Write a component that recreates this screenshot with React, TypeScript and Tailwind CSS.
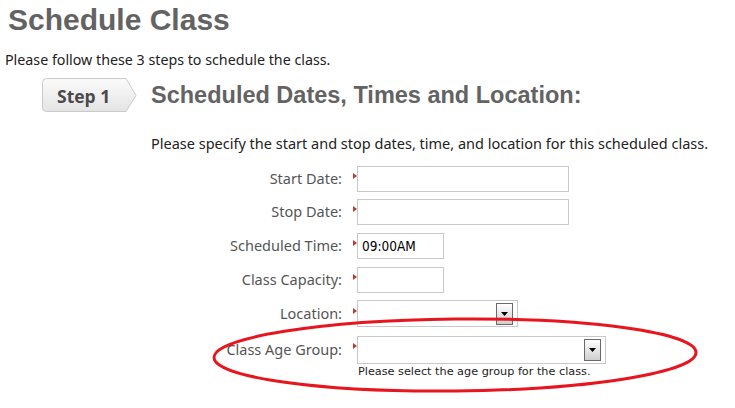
const FIELDS = [
  { label: "Start Date:", width: "w-[212px]", value: "", gap: "mt-0" },
  { label: "Stop Date:", width: "w-[212px]", value: "", gap: "mt-[7px]" },
  { label: "Scheduled Time:", width: "w-[87px]", value: "09:00AM", gap: "mt-[8px]" },
  { label: "Class Capacity:", width: "w-[87px]", value: "", gap: "mt-[8px]" },
];

function Marker() {
  return (
    <div className="w-[15px] h-[26px] relative shrink-0">
      <svg className="absolute left-[11px] top-[7px]" width="4" height="6" viewBox="0 0 4 6">
        <path d="M0 0 L4 3 L0 6 Z" fill="#c0392b" />
      </svg>
    </div>
  );
}

function SelectBox({ width, height }: { width: string; height: string }) {
  return (
    <div className={`${width} ${height} border border-[#c8c8c8] bg-white flex items-start justify-end pr-[4px] pt-[2px]`}>
      <div className="w-[17px] h-[22px] border border-[#6a6a6a] bg-gradient-to-b from-white to-[#cfcfcf] flex items-center justify-center">
        <svg width="7" height="4" viewBox="0 0 7 4">
          <path d="M0 0 L7 0 L3.5 4 Z" fill="#000" />
        </svg>
      </div>
    </div>
  );
}

export default function App() {
  return (
    <div className="relative min-h-screen bg-white font-['Noto_Sans',sans-serif] text-[#222]">
      <h1 className="pl-[8px] pt-[1px] font-['Liberation_Sans',Arial,sans-serif] font-bold text-[30px] leading-[38px] text-[#636363]">
        Schedule Class
      </h1>
      <p className="pl-[5px] mt-[12px] text-[14.25px] leading-[18px]">
        Please follow these 3 steps to schedule the class.
      </p>

      <div className="flex items-center mt-[9px] pl-[42px]">
        <div className="relative w-[95px] h-[35px] flex items-center pl-[15px]">
          <svg className="absolute inset-0" width="95" height="35" viewBox="0 0 95 35">
            <defs>
              <linearGradient id="stepg" x1="0" y1="0" x2="0" y2="1">
                <stop offset="0" stopColor="#fbfbfb" />
                <stop offset="1" stopColor="#e4e4e4" />
              </linearGradient>
            </defs>
            <path
              d="M4.5 0.5 H84 L94 17.5 L84 33.5 H4.5 Q0.5 33.5 0.5 29.5 V4.5 Q0.5 0.5 4.5 0.5 Z"
              fill="url(#stepg)"
              stroke="#c9c9c9"
            />
          </svg>
          <span className="relative font-['Open_Sans',sans-serif] font-bold text-[17.5px] leading-[20px] text-[#4a4a4a]">
            Step 1
          </span>
        </div>
        <h2 className="ml-[14px] font-['Liberation_Sans',Arial,sans-serif] font-bold text-[23.5px] text-[#636363]">
          Scheduled Dates, Times and Location:
        </h2>
      </div>

      <div className="pl-[151px]">
        <p className="mt-[21px] text-[14.5px] leading-[18px]">
          Please specify the start and stop dates, time, and location for this scheduled class.
        </p>

        <div className="mt-[14px] flex flex-col">
          {FIELDS.map((f) => (
            <div key={f.label} className={`flex items-center ${f.gap}`}>
              <div className="w-[191px] text-right text-[14.5px] text-[#555]">{f.label}</div>
              <Marker />
              <div
                className={`${f.width} h-[26px] border border-[#c8c8c8] bg-white flex items-center pl-[4px] font-['DejaVu_Sans_Condensed',sans-serif] text-[13.5px] text-black`}
              >
                {f.value}
              </div>
            </div>
          ))}

          <div className="flex items-center mt-[7px]">
            <div className="w-[191px] text-right text-[14.5px] text-[#555]">Location:</div>
            <Marker />
            <SelectBox width="w-[161px]" height="h-[27px]" />
          </div>

          <div className="flex items-start mt-[9px]">
            <div className="w-[191px] h-[28px] flex items-center justify-end text-[14.5px] text-[#555]">
              Class Age Group:
            </div>
            <Marker />
            <div className="flex flex-col">
              <SelectBox width="w-[249px]" height="h-[28px]" />
              <div className="mt-[1px] pl-[1px] font-['DejaVu_Sans',sans-serif] text-[11.25px] leading-[14px] text-[#222]">
                Please select the age group for the class.
              </div>
            </div>
          </div>
        </div>
      </div>

      <svg className="absolute left-0 top-0 pointer-events-none" width="735" height="408" viewBox="0 0 735 408">
        <ellipse cx="455" cy="355" rx="241" ry="36" fill="none" stroke="#e8141e" strokeWidth="3" transform="rotate(-0.6 455 355)" />
      </svg>
    </div>
  );
}
